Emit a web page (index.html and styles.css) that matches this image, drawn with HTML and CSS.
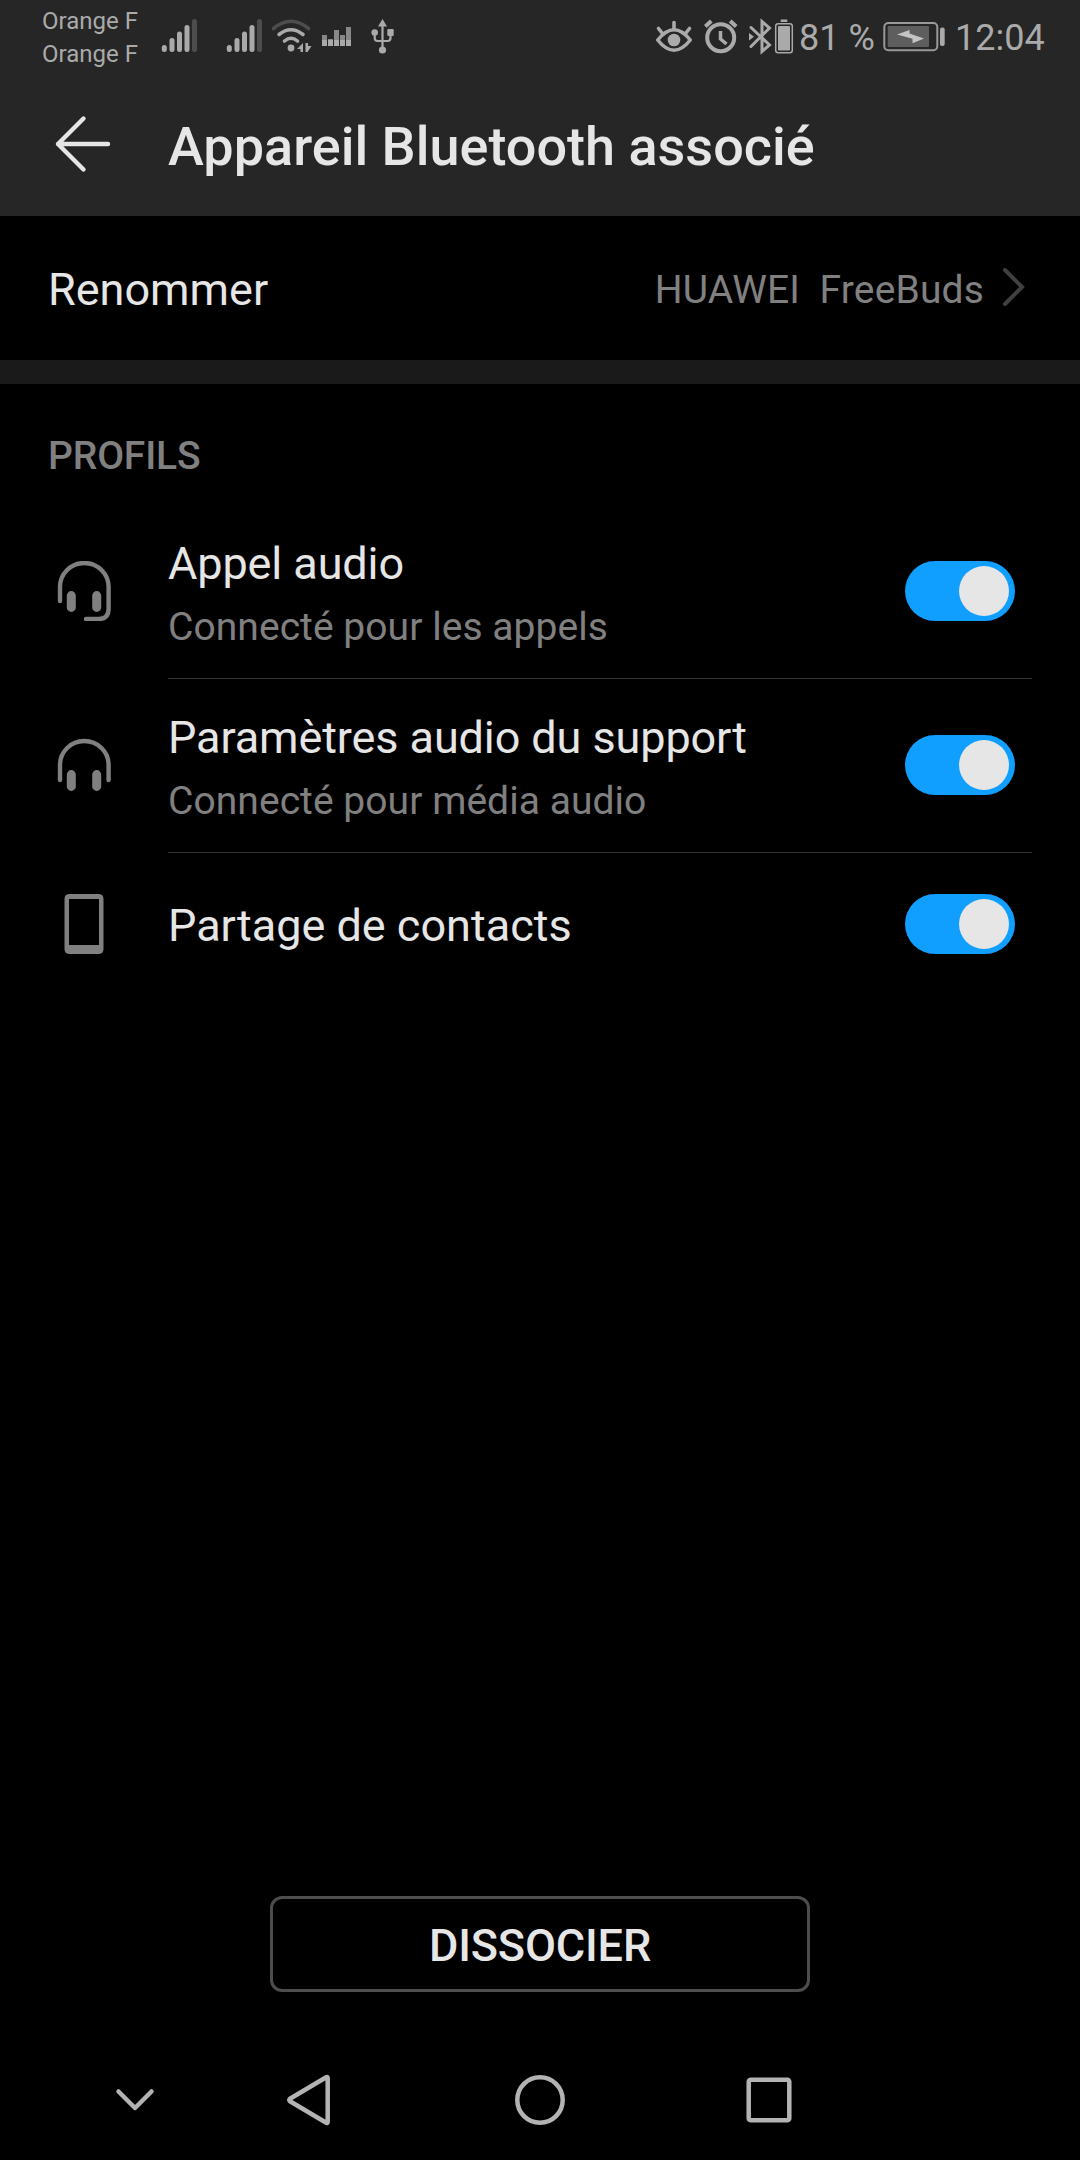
FILE: index.html
```html
<!DOCTYPE html>
<html lang="fr">
<head>
  <meta charset="UTF-8">
  <meta name="viewport" content="width=device-width, initial-scale=1.0">
  <title>Appareil Bluetooth associé</title>
  <link rel="stylesheet" href="styles.css">
</head>
<body>
  <div class="screen">
    <div class="status-bar">
      <div class="operators">
        <span>Orange F</span>
        <span>Orange F</span>
      </div>
      <svg class="signal-1" width="38" height="72" viewBox="160 0 38 72" stroke="#aaa" stroke-width="5" stroke-linecap="round">
        <path d="M164.3 47.5v2M172 40.5v9M179.5 34v15.5M187 27.5v22"/>
        <path d="M194.5 21.5v28" stroke="#4d4d4d"/>
      </svg>
      <svg class="signal-2" width="38" height="72" viewBox="160 0 38 72" stroke="#aaa" stroke-width="5" stroke-linecap="round">
        <path d="M164.3 47.5v2M172 40.5v9M179.5 34v15.5M187 27.5v22"/>
        <path d="M194.5 21.5v28" stroke="#4d4d4d"/>
      </svg>
      <svg class="wifi" width="42" height="72" viewBox="270 0 42 72" fill="none" stroke="#aaa" stroke-width="3.6" stroke-linecap="round">
        <path d="M273.500 28.500Q291 14 308.500 28.500" stroke="#4d4d4d"/>
        <path d="M279 34.500Q291 25 303 34.500"/>
        <path d="M284.500 41Q291 35.500 297.500 41"/>
        <circle cx="291" cy="48" r="3.4" fill="#aaa" stroke="none"/>
        <path d="M303 43v9h-2.500v-3H297zM305.500 43h2.500v3h3.500l-4 6h-2z" fill="#aaa" stroke="none"/>
      </svg>
      <svg class="traffic" width="30" height="72" viewBox="322 0 30 72">
        <path d="M322 35h5v6h-5zM328 39h5v2h-5zM334 30h5v11h-5zM340 35h5v6h-5zM346 27h5v14h-5z" fill="#888"/>
        <path d="M322 40h5v6h-5zM328 40h5v6h-5zM334 40h5v6h-5zM340 40h5v6h-5zM346 40h5v6h-5z" fill="#aaa"/>
      </svg>
      <svg class="usb" width="26" height="72" viewBox="370 0 26 72" fill="#aaa">
        <path d="M382.500 24v24M374.700 33v5q0 3 3 3h9.800q3 0 3-3v-5" fill="none" stroke="#aaa" stroke-width="2.2"/>
        <path d="M382.500 19l4.500 7.500h-9z"/>
        <circle cx="382.500" cy="50" r="3.600"/>
        <circle cx="374.700" cy="32.500" r="3.300"/>
        <rect x="387.300" y="29" width="6.400" height="7" rx="1"/>
      </svg>
      <div class="status-right">
        <svg width="38" height="72" viewBox="655 0 38 72" fill="none" stroke="#aaa" stroke-width="3.6" stroke-linecap="round">
          <path d="M657.700 40Q674 19.500 690.300 40Q674 60.500 657.700 40z" stroke-linejoin="round"/>
          <circle cx="674" cy="40" r="6.300" fill="#aaa" stroke="none"/>
          <path d="M674 22.500v6M658.500 28.500l4 5M689.500 28.500l-4 5"/>
        </svg>
        <svg class="alarm" width="34" height="72" viewBox="704 0 34 72" fill="none" stroke="#aaa" stroke-width="4">
          <circle cx="720.700" cy="37.700" r="13.500"/>
          <path d="M705.300 26.500l6-5.500M736.200 26.500l-6-5.500"/>
          <path d="M720.500 31v8l6 5" stroke-width="3.500"/>
        </svg>
        <svg class="bluetooth" width="24" height="72" viewBox="749 0 24 72" fill="none" stroke="#aaa" stroke-width="3">
          <path d="M751 27.500l18.500 17.500-7.500 6.500V21.500l7.500 6.500L751 46.500" stroke-linecap="round"/>
          <path d="M749 33l5 3.700-5 3.700z" fill="#aaa" stroke="none"/>
        </svg>
        <svg class="buds-battery" width="20" height="72" viewBox="774 0 20 72">
          <rect x="775.700" y="23.700" width="16.600" height="29" rx="2.500" fill="none" stroke="#aaa" stroke-width="1.500"/>
          <rect x="778" y="26" width="12" height="24.500" rx="1" fill="#aaa"/>
          <rect x="780.500" y="19.500" width="7" height="2.500" rx="1" fill="#aaa"/>
        </svg>
        <span class="percent">81&nbsp;%</span>
        <svg class="battery" width="62" height="72" viewBox="883 0 62 72">
          <rect x="884.300" y="23" width="53" height="27.300" rx="4" fill="none" stroke="#999" stroke-width="2"/>
          <rect x="887.700" y="26" width="41.300" height="21" rx="1" fill="#5e5e5e"/>
          <path d="M897 34.500l12.500-4.500v3.500l14.500 5-11.500 4.700v-4.400z" fill="#c4c4c4"/>
          <rect x="940" y="27.500" width="4.700" height="18.500" rx="2" fill="#aaa"/>
        </svg>
        <span class="clock">12:04</span>
      </div>
    </div>

    <header class="app-bar">
      <svg class="back" width="60" height="60" viewBox="0 0 60 60" fill="none" stroke="#e6e6e6" stroke-width="4.4" stroke-linecap="round" stroke-linejoin="round">
        <path d="M54 30H4M29.500 4.500L4 30l25.500 25.500"/>
      </svg>
      <h1>Appareil Bluetooth associé</h1>
    </header>

    <div class="rename">
      <span class="rename-label">Renommer</span>
      <span class="rename-value">HUAWEI&nbsp; FreeBuds</span>
      <svg class="chevron" width="24" height="42" viewBox="0 0 24 42" fill="none" stroke="#404040" stroke-width="4" stroke-linecap="round">
        <path d="M3 3l17 17L3 37"/>
      </svg>
    </div>

    <div class="band"></div>

    <h2>PROFILS</h2>
    <div class="profiles">
      <div class="profile">
        <svg width="60" height="60" viewBox="0 0 60 60" fill="none" stroke="#808080" stroke-width="4.4" stroke-linecap="round">
          <path d="M6 40V26a24.300 24 0 0 1 48.600 0v22q0 10-10 10H32"/>
          <path d="M17.300 34.600v11.800M42.700 34.600v11.800" stroke-width="9"/>
        </svg>
        <div class="profile-main">
          <div class="profile-text">
            <div class="profile-name">Appel audio</div>
            <div class="profile-state">Connecté pour les appels</div>
          </div>
          <div class="switch"></div>
        </div>
      </div>
      <div class="profile">
        <svg width="60" height="60" viewBox="0 0 60 60" fill="none" stroke="#808080" stroke-width="4.4" stroke-linecap="round">
          <path d="M6 45V30a24.300 24 0 0 1 48.600 0v15"/>
          <path d="M17.300 39.600v11.800M42.700 39.600v11.800" stroke-width="9"/>
        </svg>
        <div class="profile-main">
          <div class="profile-text">
            <div class="profile-name">Paramètres audio du support</div>
            <div class="profile-state">Connecté pour média audio</div>
          </div>
          <div class="switch"></div>
        </div>
      </div>
      <div class="profile short">
        <svg width="60" height="60" viewBox="0 0 60 60" fill="#808080">
          <path fill-rule="evenodd" d="M15.500 0h29q5 0 5 5v50q0 5-5 5h-29q-5 0-5-5V5q0-5 5-5zM15 5v46h30V5z"/>
        </svg>
        <div class="profile-main">
          <div class="profile-name">Partage de contacts</div>
          <div class="switch"></div>
        </div>
      </div>
    </div>

    <button type="button" class="unpair">DISSOCIER</button>

    <nav class="nav-bar">
      <svg width="60" height="60" viewBox="0 0 60 60">
        <path d="M13.500 21.500L30 38l16.500-16.500"/>
      </svg>
      <svg width="60" height="60" viewBox="0 0 60 60">
        <path d="M49.700 8v44q0 1.500-1.500.7L12 31.300q-1.500-1.300 0-2.600L48.200 7.300q1.500-.8 1.500.7z"/>
      </svg>
      <svg width="60" height="60" viewBox="0 0 60 60">
        <circle cx="30" cy="30" r="22.700"/>
      </svg>
      <svg width="60" height="60" viewBox="0 0 60 60">
        <rect x="9.700" y="9.700" width="40.600" height="40.600" rx="2"/>
      </svg>
    </nav>
  </div>
</body>
</html>
```

FILE: styles.css
```css
* {
  box-sizing: border-box;
  margin: 0;
  padding: 0;
}
body {
  font-family: Roboto, Arial, sans-serif;
  background-color: #000;
  color: #e6e6e6;
}
svg {
  display: block;
  flex-shrink: 0;
}
.screen {
  width: 1080px;
  height: 2160px;
  display: flex;
  flex-direction: column;
  overflow: hidden;
}

/* Barre d'état */
.status-bar {
  height: 72px;
  display: flex;
  align-items: center;
  padding: 0 35px 0 42px;
  background-color: #262626;
  color: #aaa;
}
.operators {
  width: 118px;
  padding-top: 3px;
  font-size: 24px;
  line-height: 33px;
}
.operators span {
  display: block;
}
.signal-2 {
  margin-left: 27px;
}
.wifi {
  margin-left: 7px;
}
.traffic {
  margin-left: 10px;
}
.usb {
  margin-left: 18px;
}
.status-right {
  display: flex;
  align-items: center;
  margin-left: auto;
  font-size: 36px;
  line-height: 72px;
}
.alarm,
.bluetooth {
  margin-left: 11px;
}
.buds-battery {
  margin-left: 1px;
}
.percent,
.clock {
  height: 72px;
  padding-top: 2px;
  white-space: nowrap;
}
.percent {
  width: 84px;
  padding-left: 5px;
}
.battery {
  margin-left: 5px;
}
.clock {
  width: 90px;
  margin-left: 10px;
}

/* En-tête */
.app-bar {
  height: 144px;
  display: flex;
  align-items: center;
  padding-left: 54px;
  background-color: #262626;
}
.app-bar h1 {
  margin-left: 54px;
  padding-top: 5px;
  font-size: 54px;
  font-weight: 500;
}

.rename {
  height: 144px;
  display: flex;
  align-items: center;
  padding: 0 54px 0 48px;
}
.rename span {
  padding-top: 3px;
}
.rename-label {
  font-size: 45px;
}
.rename-value {
  margin-left: auto;
  font-size: 39px;
  letter-spacing: 0.15px;
  color: #808080;
}
.chevron {
  margin-left: 18px;
}
.band {
  height: 24px;
  background-color: #1a1a1a;
}

/* Profils */
h2 {
  height: 120px;
  padding: 24px 48px 0;
  font-size: 39px;
  font-weight: 500;
  letter-spacing: -0.15px;
  line-height: 96px;
  color: #808080;
}
.profile {
  height: 174px;
  display: flex;
  align-items: center;
  padding: 0 48px 0 54px;
}
.profile.short {
  height: 144px;
}
.profile-main {
  flex: 1;
  height: 100%;
  display: flex;
  align-items: center;
  justify-content: space-between;
  margin-left: 54px;
  padding-right: 17px;
  box-shadow: 0 1px 0 #333;
}
.profile-text {
  padding-top: 2px;
}
.profile-name {
  font-size: 45px;
  letter-spacing: -0.1px;
  line-height: 60px;
}
.profile-state {
  margin-top: 10px;
  font-size: 39px;
  letter-spacing: 0.05px;
  line-height: 46px;
  color: #808080;
}
.short .profile-main {
  box-shadow: none;
}
.short .profile-name {
  padding-top: 3px;
  letter-spacing: 0;
}
.switch {
  width: 110px;
  height: 60px;
  padding: 5px 6px;
  border-radius: 30px;
  background-color: #109fff;
}
.switch::after {
  content: "";
  display: block;
  width: 50px;
  height: 50px;
  margin-left: auto;
  border-radius: 50%;
  background-color: #e6e6e6;
}

.unpair {
  width: 540px;
  height: 96px;
  margin: auto auto 48px;
  padding-top: 3px;
  border: 3px solid #4d4d4d;
  border-radius: 12px;
  background: none;
  color: #e6e6e6;
  font-family: inherit;
  font-size: 45px;
  font-weight: 500;
  letter-spacing: -0.15px;
}
.nav-bar {
  height: 120px;
  display: grid;
  grid-template-columns: 173px 232px 229px auto;
  align-items: center;
  padding-left: 105px;
}
.nav-bar svg {
  fill: none;
  stroke: #b3b3b3;
  stroke-width: 4.5;
  stroke-linecap: round;
  stroke-linejoin: round;
}
```
